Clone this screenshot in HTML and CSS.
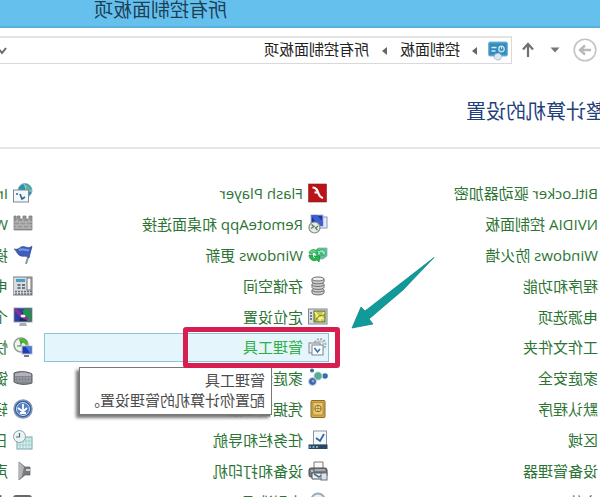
FILE: index.html
```html
<!DOCTYPE html>
<html lang="zh-CN">
<head>
<meta charset="utf-8">
<title>所有控制面板项</title>
<link rel="stylesheet" href="styles.css">
</head>
<body>
<div class="window">
  <header class="titlebar">所有控制面板项</header>
  <nav class="toolbar">
    <button class="tool back" aria-label="后退"><svg viewBox="0 0 24 24" width="24" height="24" fill="none" stroke="#c4c4c4"><circle cx="12" cy="12" r="10.8" stroke-width="1.6"/><path d="M6 12h11M12 7.500l5 4.500-5 4.500" stroke-width="2.400" stroke="#b9b9b9"/></svg></button>
    <button class="tool recent" aria-label="最近位置"><svg viewBox="0 0 10 6" width="10" height="6"><path d="M0.500 0.500h9L5 5.500z" fill="#777"/></svg></button>
    <button class="tool up" aria-label="上移"><svg viewBox="0 0 14 16" width="14" height="16" fill="none" stroke="#707070" stroke-width="2.200"><path d="M7 15V2M2 7.500L7 2l5 5.500"/></svg></button>
    <div class="address">
      <svg class="place" viewBox="0 0 20 20" width="20" height="20"><rect x=".5" y="1" width="19" height="14" rx="1.500" fill="#3f95c6" stroke="#78b4d2"/><rect x="2" y="3" width="16" height="10" fill="#358abd"/><circle cx="6.500" cy="8" r="2.700" fill="none" stroke="#b8e4f4" stroke-width="1.400"/><path d="M6.500 8V5" stroke="#f6d98b"/><path d="M11.500 6.500h5M12.500 10h4" stroke="#c9edf8" stroke-width="1.600"/><path d="M6 15l3-3 4 1 1 4-3 2H8z" fill="#d9e9f2" stroke="#8ba9bd" stroke-width=".6"/></svg>
      <svg class="sep" viewBox="0 0 5 8" width="5" height="8"><path d="M0 0l5 4-5 4z" fill="#666"/></svg>
      <a href="#">控制面板</a>
      <svg class="sep" viewBox="0 0 5 8" width="5" height="8"><path d="M0 0l5 4-5 4z" fill="#666"/></svg>
      <a href="#">所有控制面板项</a>
      <button class="tool expand" aria-label="展开"><svg viewBox="0 0 10 8" width="10" height="8" fill="none" stroke="#666" stroke-width="2"><path d="M1 1l4 5 4-5"/></svg></button>
    </div>
  </nav>
  <h1 class="heading">整计算机的设置</h1>
  <main class="content">
    <ul class="items">
      <li><i class="icon"></i><a href="#">BitLocker 驱动器加密</a></li>
      <li><i class="icon"></i><a href="#">NVIDIA 控制面板</a></li>
      <li><i class="icon"></i><a href="#">Windows 防火墙</a></li>
      <li><i class="icon"></i><a href="#">程序和功能</a></li>
      <li><i class="icon"></i><a href="#">电源选项</a></li>
      <li><i class="icon"></i><a href="#">工作文件夹</a></li>
      <li><i class="icon"></i><a href="#">家庭安全</a></li>
      <li><i class="icon"></i><a href="#">默认程序</a></li>
      <li><i class="icon"></i><a href="#">区域</a></li>
      <li><i class="icon"></i><a href="#">设备管理器</a></li>
      <li><i class="icon"></i><a href="#">字体</a></li>

      <li><svg class="icon" viewBox="0 0 20 20"><rect x="1.500" y="1" width="18" height="18" fill="#b91417" stroke="#8d1d1d" stroke-width=".6"/><path d="M15.500 4.500c-4 0-5 3-6 6-.8 2.500-2 4-4.500 4.500M9.500 9.500h4" fill="none" stroke="#fff" stroke-width="2.200"/></svg><a href="#">Flash Player</a></li>
      <li><svg class="icon" viewBox="0 0 20 20"><rect x="1" y="3" width="9" height="11" fill="#e3e9f6" stroke="#8796bd"/><rect x="5" y="1" width="12" height="11" fill="#1e35a5" stroke="#b0b8d8"/><path d="M5 8l6-7h6l-7 11H5z" fill="#3c60cd"/><circle cx="13.500" cy="13.500" r="5.500" fill="#e8ece8" stroke="#858e87" stroke-width="1.200"/><path d="M10 12l2.500 2-2 2M16.500 10.500l-2.500 2 3 2" fill="none" stroke="#547b5e" stroke-width="1.300"/></svg><a href="#">RemoteApp 和桌面连接</a></li>
      <li><svg class="icon" viewBox="0 0 20 20"><path d="M1 3h9l3 4-3 7H5l-4-3z" fill="#64bfa8" stroke="#7aa9a2" stroke-width=".7"/><path d="M2 9c1-4 4-6 7-3l2-2v6H6l2-2c-2-1-3 0-3 3z" fill="#8ce6b0" stroke="#159b4c" stroke-width=".7"/><path d="M19 10c0 4-4 7-8 5l-2 2-1-6 6 0-2 2c2 1 4-1 3-3z" fill="#24b750" stroke="#14893c" stroke-width=".7"/><path d="M10 8c2-5 8-4 9 0l-3 1c-1-2-2-2-3-1z" fill="#51d878" stroke="#14893c" stroke-width=".7"/></svg><a href="#">Windows 更新</a></li>
      <li><svg class="icon" viewBox="0 0 20 20" fill="#cfcfcf" stroke="#6d6d6d"><path d="M4 14v3c1 2.500 11 2.500 12 0v-3"/><ellipse cx="10" cy="14" rx="6" ry="2"/><path d="M4 8.500v3c1 2.500 11 2.500 12 0v-3"/><ellipse cx="10" cy="8.500" rx="6" ry="2"/><path d="M4 3v3c1 2.500 11 2.500 12 0V3"/><ellipse cx="10" cy="3" rx="6" ry="2" fill="#eee"/></svg><a href="#">存储空间</a></li>
      <li><svg class="icon" viewBox="0 0 20 20"><rect x="1" y="2" width="18.500" height="15" fill="#d9dfe2" stroke="#778a99"/><rect x="3" y="4" width="11" height="11" fill="#c8c64c" stroke="#646432"/><path d="M4 5l4 8 5-8M4 12l8-3" fill="none" stroke="#f6f18b" stroke-width="1.600"/><path d="M4 8l5 1 4 5" fill="none" stroke="#767e2c"/><path d="M16 6h2M16 9h2M16 12h2" stroke="#55606c" stroke-width="1.500"/></svg><a href="#">定位设置</a></li>
      <li class="selected"><svg class="icon" viewBox="0 0 20 20"><circle cx="8" cy="7.500" r="5.500" fill="#edf1f3" stroke="#a3adb5" stroke-width="2" stroke-dasharray="2 1.300"/><circle cx="8" cy="7.500" r="3.500" fill="none" stroke="#aeb8c0"/><rect x="8" y="6" width="11" height="10" fill="#edf0f3" stroke="#808991"/><rect x="5" y="8" width="11" height="10" fill="#fafcfd" stroke="#7c8791"/><path d="M8 12l2.500 3 3-4" fill="none" stroke="#4671a4" stroke-width="1.600"/></svg><a href="#">管理工具</a>
        <div class="tooltip" role="tooltip">管理工具<br>配置你计算机的管理设置。</div>
        <span class="marker"></span>
        <svg class="pointer" viewBox="0 0 84 72" width="84" height="72"><path d="M1 0.500L32 33l34 29-4 5 21 4-9-21-4 4-31-24z" fill="#119a9a" stroke="#08807f" stroke-width=".7"/></svg>
      </li>
      <li><svg class="icon" viewBox="0 0 20 20"><circle cx="3" cy="8" r="2.800" fill="#356fae"/><circle cx="10" cy="8" r="4.200" fill="#58a997" stroke="#dcebe5"/><circle cx="16" cy="2.500" r="2" fill="#3c6c99"/><circle cx="15.500" cy="13.500" r="4" fill="#3964a7" stroke="#d4e1ef"/><circle cx="15" cy="13" r="1.500" fill="#84a8db"/></svg><a href="#">家庭组</a></li>
      <li><svg class="icon" viewBox="0 0 20 20"><rect x="3" y="1.500" width="14" height="17" rx="1" fill="#d4a947" stroke="#8b6b2d"/><rect x="5" y="3.500" width="10" height="12.500" fill="#e9c86b" stroke="#a67f31" stroke-width=".7"/><circle cx="10" cy="9.500" r="3.200" fill="#f0dda0" stroke="#8a6925"/><path d="M10 6v7M6.500 9.500h7" stroke="#9c772c" stroke-width=".8"/></svg><a href="#">凭据管理器</a></li>
      <li><svg class="icon" viewBox="0 0 20 20"><rect x="1.500" y="1" width="13" height="14" fill="#f6f9fc" stroke="#8997a4"/><path d="M4 4l4 7 4-3" fill="none" stroke="#3168a1" stroke-width="1.800"/><rect x=".5" y="14.500" width="19" height="4.500" fill="#294763"/><path d="M10 17h2M13.500 17h2M17 17h1.500" stroke="#a2c5da" stroke-width="1.500"/></svg><a href="#">任务栏和导航</a></li>
      <li><svg class="icon" viewBox="0 0 20 20"><path d="M5 8V1h9v7" fill="#fafafa" stroke="#777"/><rect x="1" y="7" width="18" height="9" rx="2" fill="#777d82" stroke="#474c50"/><path d="M4 12h12v6H4z" fill="#f0f2f3" stroke="#555"/><path d="M6 14l3 2 5-3" stroke="#416f9b" stroke-width="1.500" fill="none"/><rect x="1" y="12" width="6" height="7" fill="#dce2e7" stroke="#65717c"/><path d="M3 9h10" stroke="#d5d9da"/><circle cx="16" cy="10" r="1" fill="#bee3c4"/></svg><a href="#">设备和打印机</a></li>
      <li><svg class="icon" viewBox="0 0 20 20"><circle cx="10" cy="8" r="6.500" fill="#e9f1f7" stroke="#9caab8" stroke-width="2"/><path d="M14 13l4 5" stroke="#8c98a3" stroke-width="3"/></svg><a href="#">索引选项</a></li>

      <li><svg class="icon" viewBox="0 0 20 20"><circle cx="8" cy="7.500" r="7" fill="#318fb8" stroke="#7eb4c6"/><path d="M2 7c1-4 4-6 7-5-1 4-3 4-4 8z" fill="#65b68a"/><path d="M9 1c-3 4-2 9 1 13M1 8h13" fill="none" stroke="#a7dbe7" stroke-width=".8"/><rect x="4.500" y="7" width="15" height="12" fill="#f5f8fb" stroke="#7c8995"/><path d="M8 14l3 2 2-5M15 11h2" fill="none" stroke="#2f638d" stroke-width="1.600"/></svg><a href="#">Internet 选项</a></li>
      <li><svg class="icon" viewBox="0 0 20 20"><path d="M1 2h3v3h3V2h3v3h3V2h3v3h1V2h2v14H1z" fill="#969696" stroke="#777" stroke-width=".7"/><path d="M1 8h18M1 11h18M1 14h18M4 5v3M10 5v3M16 5v3M7 8v3M13 8v3M4 11v3M10 11v3M16 11v3" stroke="#c6c6c6" stroke-width=".8"/></svg><a href="#">Windows Defender</a></li>
      <li><svg class="icon" viewBox="0 0 20 20"><path d="M2 2l5 17" stroke="#8e969d" stroke-width="2"/><path d="M1 1c4 4 7-1 11 1 2 1 3 3 7 2-3 2-3 6-7 7-3 1-5-1-8 2z" fill="#3e5dbc" stroke="#2c4292" stroke-width=".6"/><path d="M4 5c4 1 5-2 10 0" fill="none" stroke="#7895df" stroke-width="2"/></svg><a href="#">操作中心</a></li>
      <li><svg class="icon" viewBox="0 0 20 20"><rect x="1" y="1" width="19" height="18" fill="#d8dadd" stroke="#777c82"/><rect x="2" y="2" width="4" height="12" fill="#f8f8f8" stroke="#777"/><rect x="8" y="3" width="9" height="3" fill="#4a9fc9"/><path d="M8 9h3M12.500 9h3M8 12h3M12.500 12h3" stroke="#69747d" stroke-width="1.800"/><path d="M1 15.500h18M1 18h18" stroke="#687079" stroke-width="1.500" stroke-dasharray="2 1"/></svg><a href="#">电话和调制解调器</a></li>
      <li><svg class="icon" viewBox="0 0 20 20"><path d="M7 16h6l1 3H6z" fill="#a8acb4"/><rect x="1" y="1" width="18" height="14" fill="#20275d" stroke="#a1a6b4"/><path d="M2 2h10L6 14H2z" fill="#24904e"/><path d="M9 2h9v12h-4z" fill="#293fae"/><path d="M5 12c4-1 8-4 13-10" stroke="#8f2f91" stroke-width="3"/><ellipse cx="10" cy="9" rx="2.500" ry="1.500" fill="#f1f5ff"/></svg><a href="#">个性化</a></li>
      <li><svg class="icon" viewBox="0 0 20 20"><circle cx="12" cy="8" r="7" fill="#edf5ea" stroke="#929d93" stroke-width="1.500"/><path d="M5 6c2-6 8-6 9-3l-2 4c-2-2-4-1-5 2z" fill="#50b638"/><path d="M12 4v5h4" fill="none" stroke="#527060"/><rect x="1" y="9" width="10" height="8" fill="#1c3fb3" stroke="#b7bfce"/><path d="M2 10h5l-4 6H2z" fill="#497bdf"/><path d="M4 19h5" stroke="#777f8c" stroke-width="2"/></svg><a href="#">快速恢复</a></li>
      <li><svg class="icon" viewBox="0 0 20 20"><path d="M1 6c5-3 13-3 18-1v9c-5 3-13 3-18 1z" fill="#85878e" stroke="#5d5f66"/><path d="M2 6c5-2 11-2 16 0v2H2z" fill="#b1b3ba"/><path d="M2 10h16M2 13h16" stroke="#b6b8bf" stroke-width=".8" stroke-dasharray="2 1"/></svg><a href="#">键盘</a></li>
      <li><svg class="icon" viewBox="0 0 20 20"><circle cx="10" cy="10" r="9" fill="#315ca0" stroke="#8497b3" stroke-width="1.500"/><circle cx="10" cy="10" r="6.500" fill="#547fc2" stroke="#c8dcf4"/><path d="M10 5v7M6 9l4 3.500L15 9M7 14h6" fill="none" stroke="#fff" stroke-width="1.800"/></svg><a href="#">轻松使用</a></li>
      <li><svg class="icon" viewBox="0 0 20 20"><rect x="1" y="7" width="15" height="12" fill="#d9f0ed" stroke="#72a6aa"/><path d="M4 8v11M7 8v11M10 8v11M13 8v11M1 11h15M1 15h15" stroke="#99c9c8" stroke-width=".8"/><circle cx="13.500" cy="6.500" r="6" fill="#ebf4f5" stroke="#8aa1aa"/><path d="M13.500 3v4H17" fill="none" stroke="#527080" stroke-width="1.200"/></svg><a href="#">日期和时间</a></li>
      <li><svg class="icon" viewBox="0 0 20 20"><path d="M3 6h5l6-5v18l-6-5H3z" fill="#77797c" stroke="#595b5e" stroke-width=".7"/><path d="M9 6l5-5v18l-3-4z" fill="#b3b6b8"/><path d="M3 8h4v2H3z" fill="#d1d3d4"/></svg><a href="#">声音</a></li>
      <li><svg class="icon" viewBox="0 0 20 20"><rect x="2" y="4" width="17" height="14" rx="2" fill="#eee" stroke="#686868" stroke-width="2"/></svg><a href="#">桌面</a></li>
    </ul>
  </main>
</div>
</body>
</html>
```
FILE: styles.css
```css
* {
  box-sizing: border-box;
}

body {
  margin: 0;
  background: #fff;
  color: #222;
  font: 15px/20px "Open Sans", "Noto Sans CJK SC", sans-serif;
}

/* The whole window is shown as its mirror image. */
.window {
  display: flex;
  flex-direction: column;
  height: 100vh;
  overflow: hidden;
  transform: scaleX(-1);
  border-bottom: 3px solid #fff;
}

.titlebar {
  flex: none;
  height: 28px;
  padding-left: 373px;
  background: #66c0ee;
  border-bottom: 2px solid #58b2dc;
  color: #1c4055;
  font-size: 19px;
  line-height: 20px;
}

.toolbar {
  display: flex;
  flex: none;
  align-items: center;
  height: 28px;
  margin: 8px -8px 0 3px;
}

.tool {
  display: flex;
  flex: none;
  padding: 0;
  border: 0;
  background: none;
}

.recent {
  margin-left: 13px;
}

.up {
  margin-left: 15px;
}

.address {
  display: flex;
  flex: 1;
  align-items: center;
  height: 28px;
  margin-left: 9px;
  padding: 0 4px 0 3px;
  border: 1px solid #d9d9d9;
  border-top: 2px solid #e3e3e3;
  line-height: 18px;
}

.address a {
  padding-bottom: 4px;
  color: #222;
  text-decoration: none;
}

.sep {
  margin: 0 13px;
}

.place + .sep {
  margin: 0 12px 0 11px;
}

.expand {
  margin-left: auto;
}

.heading {
  flex: none;
  margin: 33px 0 0 -6px;
  padding-bottom: 20px;
  border-bottom: 2px solid #e6e6e6;
  color: #1f3f7d;
  font-size: 20px;
  font-weight: 400;
  line-height: 30px;
}

.content {
  display: flex;
  flex: 1;
  min-height: 0;
  margin-bottom: -19px;
  padding-top: 30px;
}

.items {
  display: grid;
  flex: 1;
  grid-auto-columns: 285px;
  grid-auto-flow: column;
  grid-template-rows: repeat(11, 1fr);
  gap: 2px 10px;
  margin: 0 0 0 -24px;
  padding: 0;
  list-style: none;
}

.items li {
  position: relative;
  display: flex;
  align-items: center;
  gap: 5px;
  border: 1px solid transparent;
  white-space: nowrap;
}

.items a {
  color: #2c7433;
  text-decoration: none;
}

.icon {
  flex: none;
  width: 20px;
  height: 20px;
}

.items .selected {
  z-index: 1;
  background: #e5f5fc;
  border-color: #8cc4d8;
}

.items .selected a {
  color: #2fae45;
}

.tooltip {
  position: absolute;
  top: 33px;
  left: 56px;
  width: 193px;
  height: 48px;
  padding: 2px 6px;
  background: #fff;
  border: 1px solid #777;
  box-shadow: 3px 3px 3px #777;
  color: #4c4c4c;
}

.marker {
  position: absolute;
  top: -7px;
  left: -12px;
  width: 157px;
  height: 41px;
  border: 5px solid #d61f50;
  border-radius: 3px;
}

.pointer {
  position: absolute;
  top: -77px;
  left: -107px;
}
```
